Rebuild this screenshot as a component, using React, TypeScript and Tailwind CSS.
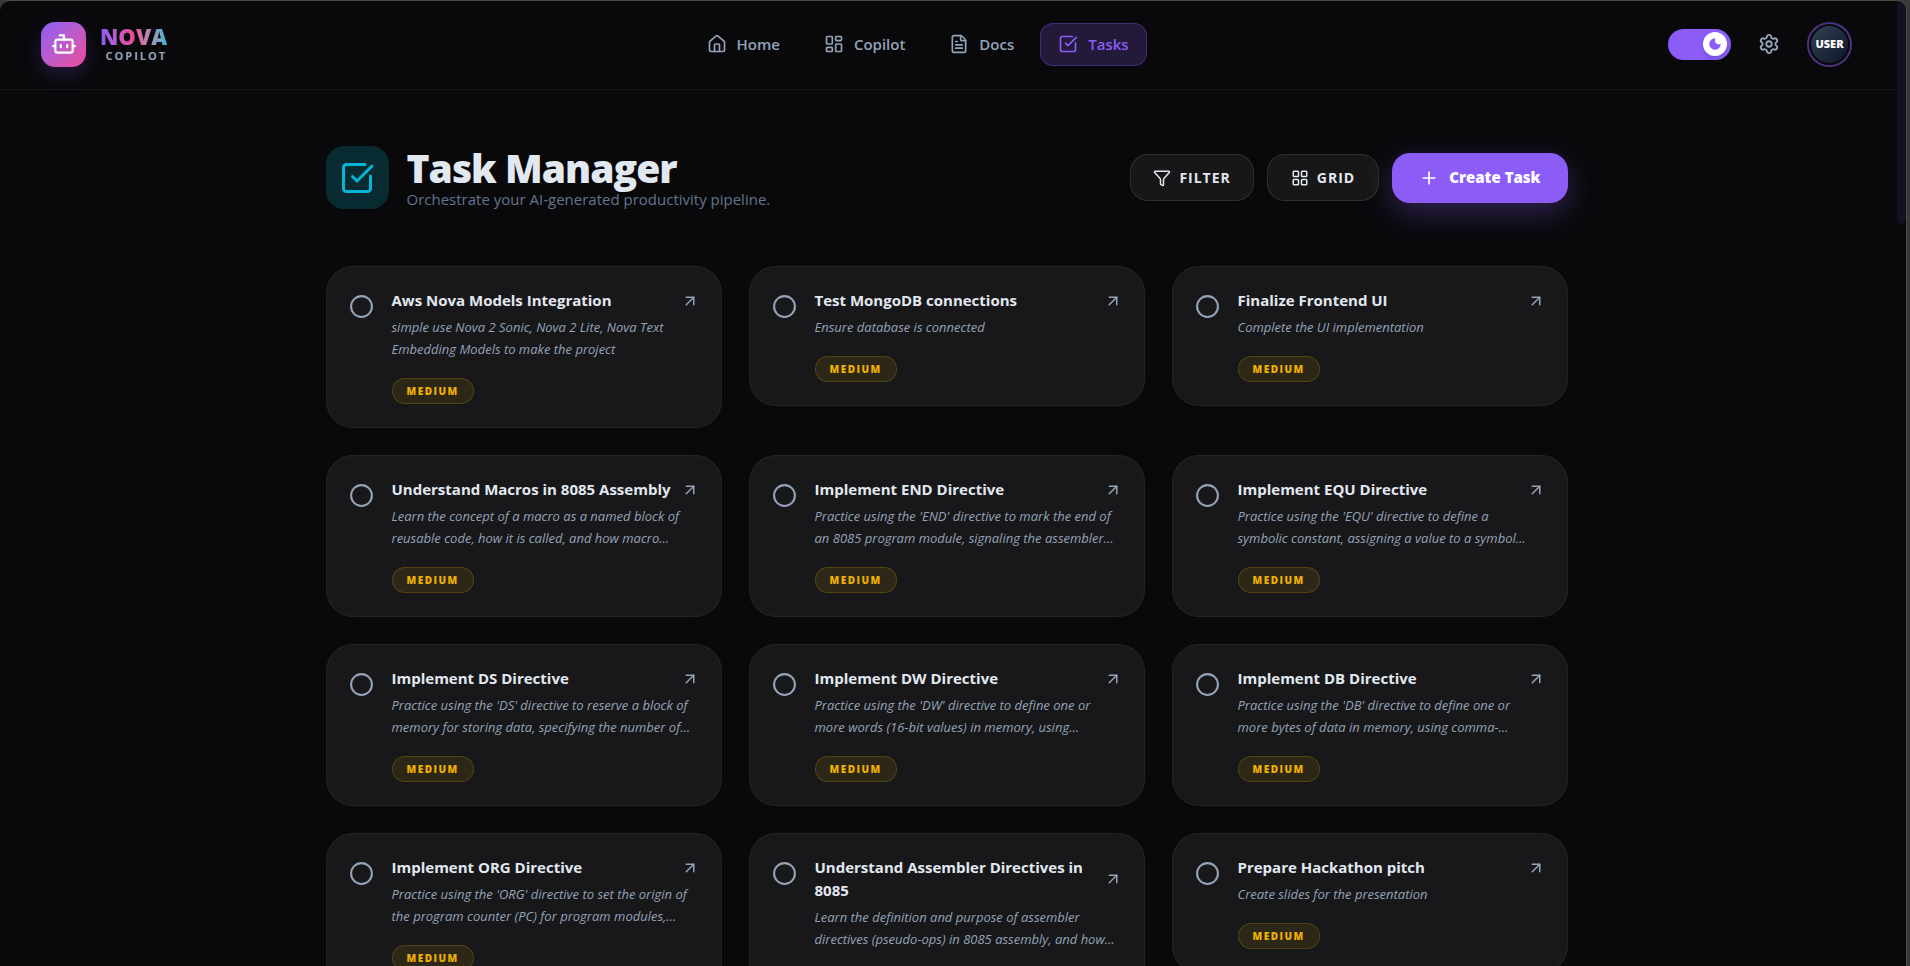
import { useState } from "react";
import {
  ArrowUpRight,
  Bot,
  Circle,
  FileText,
  Funnel,
  House,
  LayoutDashboard,
  LayoutGrid,
  Plus,
  Settings,
  SquareCheckBig,
} from "lucide-react";
import clsx from "clsx";

type Task = {
  title: string;
  description: string;
};

const tasks: Task[] = [
  {
    title: "Aws Nova Models Integration",
    description:
      "simple use Nova 2 Sonic, Nova 2 Lite, Nova Text\nEmbedding Models to make the project",
  },
  {
    title: "Test MongoDB connections",
    description: "Ensure database is connected",
  },
  {
    title: "Finalize Frontend UI",
    description: "Complete the UI implementation",
  },
  {
    title: "Understand Macros in 8085 Assembly",
    description:
      "Learn the concept of a macro as a named block of\nreusable code, how it is called, and how macro…",
  },
  {
    title: "Implement END Directive",
    description:
      "Practice using the 'END' directive to mark the end of\nan 8085 program module, signaling the assembler…",
  },
  {
    title: "Implement EQU Directive",
    description:
      "Practice using the 'EQU' directive to define a\nsymbolic constant, assigning a value to a symbol…",
  },
  {
    title: "Implement DS Directive",
    description:
      "Practice using the 'DS' directive to reserve a block of\nmemory for storing data, specifying the number of…",
  },
  {
    title: "Implement DW Directive",
    description:
      "Practice using the 'DW' directive to define one or\nmore words (16-bit values) in memory, using…",
  },
  {
    title: "Implement DB Directive",
    description:
      "Practice using the 'DB' directive to define one or\nmore bytes of data in memory, using comma-…",
  },
  {
    title: "Implement ORG Directive",
    description:
      "Practice using the 'ORG' directive to set the origin of\nthe program counter (PC) for program modules,…",
  },
  {
    title: "Understand Assembler Directives in 8085",
    description:
      "Learn the definition and purpose of assembler\ndirectives (pseudo-ops) in 8085 assembly, and how…",
  },
  {
    title: "Prepare Hackathon pitch",
    description: "Create slides for the presentation",
  },
];

const links = [
  { label: "Home", icon: House },
  { label: "Copilot", icon: LayoutDashboard },
  { label: "Docs", icon: FileText },
  { label: "Tasks", icon: SquareCheckBig, active: true },
];

function Navbar() {
  const [dark, setDark] = useState(true);

  return (
    <header className="flex h-[89px] shrink-0 items-center justify-between border-b border-white/5 pr-[45px] pb-0.5 pl-[41px]">
      <a href="#" className="flex items-center gap-3.5">
        <span className="flex size-[45px] items-center justify-center rounded-[14px] bg-linear-135 from-[#8b5cf6] to-[#ec4899] shadow-[0_8px_20px_rgba(139,92,246,0.2)]">
          <Bot size={26} className="text-white" />
        </span>
        <span className="flex flex-col items-end">
          <span className="bg-linear-to-r from-[#8b5cf6] via-[#ec4899] to-[#06b6d4] bg-clip-text text-[22px] leading-6 font-extrabold text-transparent">
            NOVA
          </span>
          <span className="text-[11px] leading-4 font-bold tracking-[2px] text-[#94a3b8]">
            COPILOT
          </span>
        </span>
      </a>

      <nav className="flex items-center gap-2">
        {links.map(({ label, icon: Icon, active }) => (
          <a
            key={label}
            href="#"
            className={clsx(
              "flex h-[43px] items-center gap-2.5 rounded-[13px] border px-[17px] text-[15px] font-semibold",
              active
                ? "border-[#8b5cf6]/30 bg-[#8b5cf6]/20 text-[#8b5cf6]"
                : "border-transparent text-[#94a3b8]"
            )}
          >
            <Icon size={20} />
            {label}
          </a>
        ))}
      </nav>

      <div className="flex items-center gap-[27px]">
        <button
          type="button"
          role="switch"
          aria-checked={dark}
          aria-label="Dark mode"
          onClick={() => setDark(!dark)}
          className={clsx(
            "flex h-[31px] w-[63px] items-center rounded-full bg-[#8b5cf6] px-1",
            dark && "justify-end"
          )}
        >
          <span className="flex size-6 items-center justify-center rounded-full bg-white shadow-md">
            <svg viewBox="0 0 12 12" className="size-3 fill-[#8b5cf6]">
              <path d="M6.200 .3A5.700 5.700 0 1 0 11.700 5.800C10.200 6.500 8.400 6.600 7.200 5.600 6 4.500 5.800 2 6.200 .3Z" />
            </svg>
          </span>
        </button>
        <button
          type="button"
          aria-label="Settings"
          className="text-[#94a3b8]"
        >
          <Settings size={22} />
        </button>
        <button
          type="button"
          className="size-[45px] rounded-full border-2 border-[#8b5cf6]/50 p-0.5"
        >
          <span className="flex size-full items-center justify-center rounded-full bg-linear-135 from-[#334155] to-[#0f172a] text-[11px] font-extrabold text-white">
            USER
          </span>
        </button>
      </div>
    </header>
  );
}

function TaskCard({ title, description }: Task) {
  return (
    <article className="flex gap-[18px] rounded-[27px] border border-white/5 bg-[#18181a] px-[22px] pt-[22px] pb-[23px]">
      <button
        type="button"
        aria-label={`Complete ${title}`}
        className="mt-[5px] self-start text-[#94a3b8]"
      >
        <Circle size={25} />
      </button>
      <div className="min-w-0 flex-1">
        <div className="flex items-center justify-between gap-1">
          <h3 className="text-[15px] leading-[23px] font-bold text-[#e2e8f0]">
            {title}
          </h3>
          <ArrowUpRight size={18} className="shrink-0 text-[#94a3b8]" />
        </div>
        <p className="mt-1 text-[13px] leading-[22px] whitespace-pre-line text-[#94a3b8] italic">
          {description}
        </p>
        <span className="mt-[18px] inline-flex h-[26px] items-center rounded-full border border-[#eab308]/20 bg-[#eab308]/10 px-3.5 text-[10px] font-extrabold tracking-[1.5px] text-[#f0b000]">
          MEDIUM
        </span>
      </div>
    </article>
  );
}

export default function App() {
  return (
    <div className="h-screen overflow-hidden bg-[#3a3a3a] pr-[3px] font-['Open_Sans','Noto_Sans',sans-serif]">
      <div className="flex h-full overflow-hidden rounded-t-[10px] border-t border-r border-[#4a4a4a] bg-[#09090b]">
        <div className="flex min-w-0 flex-1 flex-col overflow-hidden">
          <Navbar />
          <div className="pt-14 pr-1">
            <main className="mx-auto w-full max-w-[1242px]">
              <div className="flex items-center justify-between">
                <div className="flex items-center gap-[18px]">
                  <div className="flex size-[63px] items-center justify-center rounded-[18px] bg-[#06b6d4]/20 text-[#06b6d4]">
                    <SquareCheckBig size={36} />
                  </div>
                  <div>
                    <h1 className="text-[39px] leading-[43px] font-extrabold tracking-tight text-[#e2e8f0]">
                      Task Manager
                    </h1>
                    <p className="text-[15px] leading-5 text-[#64748b]">
                      Orchestrate your AI-generated productivity pipeline.
                    </p>
                  </div>
                </div>
                <div className="flex items-center gap-[13px]">
                  <button
                    type="button"
                    className="flex h-[47px] items-center gap-2 rounded-[18px] border border-white/10 bg-[#171717] px-[22px] text-sm font-bold tracking-[1px] text-[#e2e8f0]"
                  >
                    <Funnel size={18} />
                    FILTER
                  </button>
                  <button
                    type="button"
                    className="flex h-[47px] items-center gap-2 rounded-[18px] border border-white/10 bg-[#171717] px-[23px] text-sm font-bold tracking-[1px] text-[#e2e8f0]"
                  >
                    <LayoutGrid size={18} />
                    GRID
                  </button>
                  <button
                    type="button"
                    className="flex h-[50px] items-center gap-2.5 rounded-[18px] bg-[#8b5cf6] px-[27px] text-[15px] font-extrabold text-white shadow-[0_10px_30px_rgba(139,92,246,0.3)]"
                  >
                    <Plus size={20} />
                    Create Task
                  </button>
                </div>
              </div>

              <div className="mt-[57px] grid grid-cols-3 items-start gap-[27px]">
                {tasks.map((task) => (
                  <TaskCard key={task.title} {...task} />
                ))}
              </div>
            </main>
          </div>
        </div>
        <div className="w-[9px] shrink-0">
          <div className="h-[223px] rounded-full bg-[#151022]" />
        </div>
      </div>
    </div>
  );
}
